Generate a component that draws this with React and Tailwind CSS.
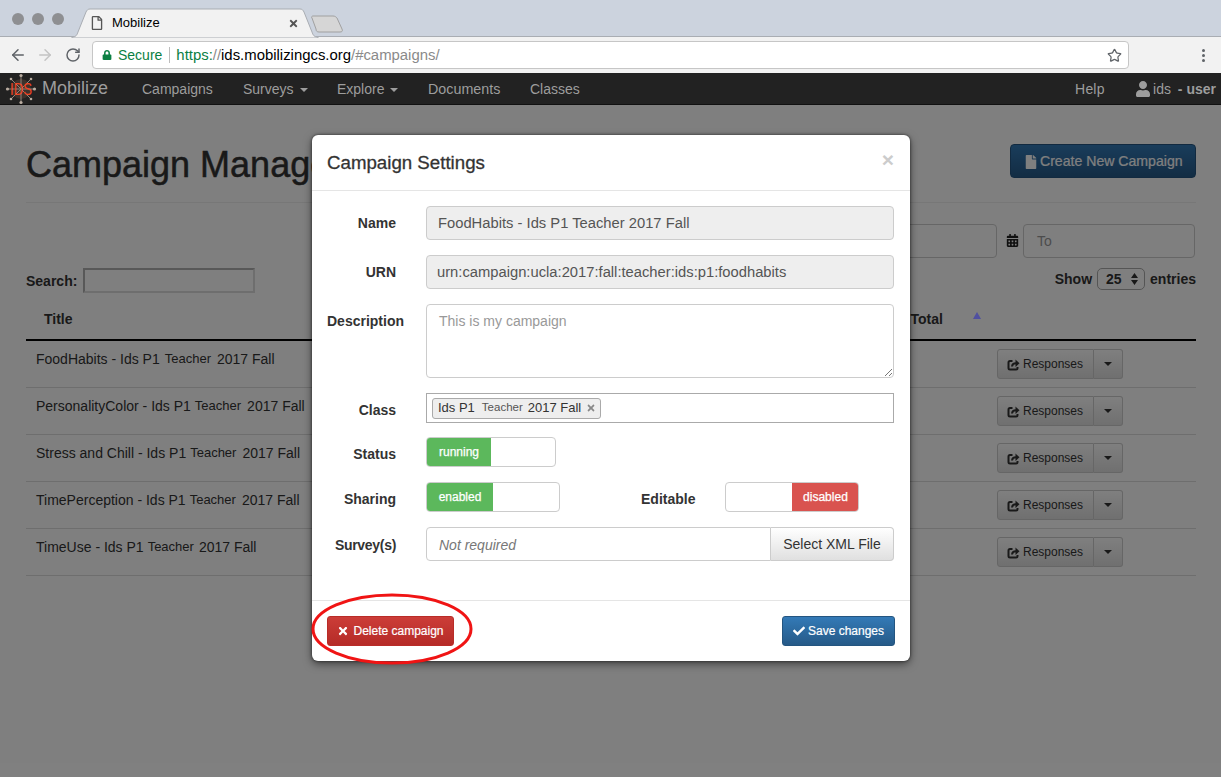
import { FaFile, FaRegFile, FaCalendarAlt, FaTimes, FaCheck, FaUser, FaLock } from "react-icons/fa";
import { ArrowLeft, ArrowRight, RotateCw, Star } from "lucide-react";

const campaigns = [
  { name: "FoodHabits - Ids P1", gap: "ml-[5px] mr-[6px]" },
  { name: "PersonalityColor - Ids P1", gap: "ml-[4px] mr-[6px]" },
  { name: "Stress and Chill - Ids P1", gap: "ml-[4px] mr-[6px]" },
  { name: "TimePerception - Ids P1", gap: "ml-[4px] mr-[6px]" },
  { name: "TimeUse - Ids P1", gap: "ml-[4px] mr-[5px]" },
];

function Caret({ className = "" }) {
  return <span className={"inline-block w-0 h-0 border-x-[4px] border-x-transparent border-t-[4px] " + className}></span>;
}

function ShareIcon() {
  return (
    <svg width="13" height="13" viewBox="0 0 13 13" fill="none" stroke="#333" strokeWidth="2">
      <path d="M10.500 9v1c0 .9-.6 1.500-1.500 1.500H3c-.9 0-1.500-.6-1.500-1.500V4.500C1.500 3.600 2.100 3 3 3h2.500" />
      <path d="M5 8.500C5.200 6.500 6.500 5.300 9 5.300" />
      <path d="M8.500 1.500L12.500 5.300 8.500 9z" fill="#333" stroke="none" />
    </svg>
  );
}

function Logo() {
  return (
    <svg width="32" height="32" viewBox="0 0 32 32" className="shrink-0">
      <circle cx="16" cy="16" r="10" fill="#3d322c" />
      <g stroke="#8f8378" strokeWidth="1">
        <path d="M16 2v28M2 16h28M6 6l20 20M26 6L6 26" />
      </g>
      <g fill="#b9aca0">
        <circle cx="16" cy="2.500" r="1.600" />
        <circle cx="16" cy="29.500" r="1.600" />
        <circle cx="2.500" cy="16" r="1.600" />
        <circle cx="29.500" cy="16" r="1.600" />
        <circle cx="6" cy="6" r="1.300" />
        <circle cx="26" cy="6" r="1.300" />
        <circle cx="6" cy="26" r="1.300" />
        <circle cx="26" cy="26" r="1.300" />
      </g>
      <text x="16" y="22" textAnchor="middle" fontSize="17" fontFamily="Liberation Sans, sans-serif" fill="#ee4423" textLength="22" lengthAdjust="spacingAndGlyphs">IDS</text>
    </svg>
  );
}

function BrowserChrome() {
  return (
    <>
      {/* tab strip */}
      <div className="relative h-[37px] bg-[#ccd3de] border-b border-[#a9adb3]">
        <div className="flex gap-2 pt-[13px] pl-3">
          <span className="w-3 h-3 rounded-full bg-[#8e8f92]"></span>
          <span className="w-3 h-3 rounded-full bg-[#8e8f92]"></span>
          <span className="w-3 h-3 rounded-full bg-[#8e8f92]"></span>
        </div>
        <svg className="absolute left-[70px] top-[8px]" width="280" height="30" viewBox="0 0 280 30">
          <path d="M2 29C6 29 7 27 8 24L16 4C17 2 18 1 20 1H230C232 1 233 2 234 4L242 24C243 27 244 29 248 29V30H2z" fill="#f2f2f2" stroke="#a9adb3" />
          <path d="M242 10C241 9 242 8 243 8H263C265 8 266 9 267 10L272 21C273 23 272 24 270 24H249C247 24 246 23 246 21z" fill="#d6d6d6" stroke="#a0a0a0" />
        </svg>
        <div className="absolute left-[90px] top-[13px] flex items-center text-[13px] text-black">
          <FaRegFile className="text-[14px] text-[#555] mr-[8px]" />
          <span>Mobilize</span>
        </div>
        <FaTimes className="absolute left-[288px] top-[18px] text-[11px] text-[#555]" />
      </div>
      {/* toolbar */}
      <div className="h-[36px] bg-[#f2f2f2] flex items-center pl-[9px] pr-[16px]">
        <ArrowLeft className="w-[18px] h-[18px] text-[#5f6368] mr-[9px]" strokeWidth={2} />
        <ArrowRight className="w-[18px] h-[18px] text-[#c4c4c4] mr-[11px]" strokeWidth={2} />
        <RotateCw className="w-[16px] h-[16px] text-[#5f6368] mr-[11px]" strokeWidth={2.200} />
        <div className="h-[28px] w-[1037px] bg-white border border-[#c6c6c6] rounded-[4px] flex items-center pl-[9px] pr-[6px] text-[14px]">
          <FaLock className="text-[10px] text-[#0b8043] mr-[6px]" />
          <span className="text-[#0b8043]">Secure</span>
          <span className="w-px h-[16px] bg-[#bdbdbd] ml-[7px] mr-[6px]"></span>
          <span className="text-[14.900px] whitespace-nowrap">
            <span className="text-[#0b8043]">https:</span>
            <span className="text-[#8a8a8a]">//</span>
            <span className="text-black">ids.mobilizingcs.org</span>
            <span className="text-[#8a8a8a]">/#campaigns/</span>
          </span>
          <Star className="w-[15px] h-[15px] text-[#5f6368] ml-auto" strokeWidth={2} />
        </div>
        <div className="ml-auto flex flex-col gap-[2px]">
          <span className="w-[3px] h-[3px] rounded-full bg-[#5f6368]"></span>
          <span className="w-[3px] h-[3px] rounded-full bg-[#5f6368]"></span>
          <span className="w-[3px] h-[3px] rounded-full bg-[#5f6368]"></span>
        </div>
      </div>
    </>
  );
}

function Navbar() {
  return (
    <nav className="h-[32px] bg-[#222] border-b border-[#111] flex items-center text-[14px] text-[#9d9d9d] pl-[5px] pr-[5px]">
      <Logo />
      <span className="text-[18px] ml-[5px] w-[100px]">Mobilize</span>
      <span className="w-[101px] pt-[2px]">Campaigns</span>
      <span className="w-[94px] flex items-center pt-[2px]">Surveys<Caret className="border-t-[#9d9d9d] ml-[6px]" /></span>
      <span className="w-[91px] flex items-center pt-[2px]">Explore<Caret className="border-t-[#9d9d9d] ml-[6px]" /></span>
      <span className="w-[102px] pt-[2px] text-[14.300px]">Documents</span>
      <span className="pt-[2px]">Classes</span>
      <span className="ml-auto w-[60px] pt-[2px] tracking-[0.2px]">Help</span>
      <span className="flex items-center pt-[1px]">
        <FaUser className="text-[16px] mr-[2px]" />
        <span>ids</span>
        <span className="font-bold ml-[3px]">&nbsp;- user</span>
      </span>
    </nav>
  );
}

function CampaignRow({ row }) {
  return (
    <div className="h-[47px] border-b border-[#ddd] flex items-start text-[14px] text-[#333]">
      <div className="pl-[10px] pt-[8px] leading-[20px] flex whitespace-nowrap">
        <span>{row.name}</span>
        <span className={"text-[13px] " + row.gap}>Teacher</span>
        <span>2017 Fall</span>
      </div>
      <div className="ml-auto mr-[73px] mt-[8px] flex h-[30px] text-[12px]">
        <span className="w-[97px] border border-[#ccc] rounded-l-[3px] bg-gradient-to-b from-white to-[#e0e0e0] flex items-center pl-[9px] gap-[3px]">
          <ShareIcon />
          Responses
        </span>
        <span className="w-[29px] border border-l-0 border-[#ccc] rounded-r-[3px] bg-gradient-to-b from-white to-[#e0e0e0] flex items-center justify-center">
          <Caret className="border-t-[#333]" />
        </span>
      </div>
    </div>
  );
}

function PageBehind() {
  return (
    <main className="pl-[26px] pr-[25px] bg-white h-[672px] text-[#333]">
      <div className="flex items-start h-[98px] border-b border-[#eee]">
        <h1 className="text-[36px] leading-[40px] font-normal mt-[40px] whitespace-nowrap [-webkit-text-stroke:0.5px_#333]">Campaign Management</h1>
        <div className="ml-auto mt-[39px] w-[186px] h-[34px] rounded-[4px] border border-[#245580] bg-gradient-to-b from-[#337ab7] to-[#265a88] text-white text-[14.100px] flex items-center pl-[13px] gap-[2px] pt-[1px] [-webkit-text-stroke:0.2px_white]">
          <FaFile className="text-[14px]" />
          Create New Campaign
        </div>
      </div>
      <div className="flex justify-end items-center mt-[20px] h-[35px] pr-[1px]">
        <div className="w-[200px] h-[34px] border border-[#ccc] rounded-[4px] bg-white"></div>
        <FaCalendarAlt className="text-[13px] ml-[9px] mr-[4px] text-[#222]" />
        <div className="w-[172px] h-[34px] border border-[#ccc] rounded-[4px] bg-white pl-[13px] pt-[2px] flex items-center text-[14px] text-[#999]">To</div>
      </div>
      <div className="flex items-center justify-between mt-[10px] h-[25px] text-[14px] font-bold">
        <div className="flex items-center gap-[6px]">
          <span className="pt-[2px]">Search:</span>
          <span className="w-[172px] h-[25px] border-2 border-t-[#b0b0b0] border-l-[#b0b0b0] border-r-[#ddd] border-b-[#ddd] bg-white"></span>
        </div>
        <div className="flex items-center gap-[5px] -mt-[3px]">
          Show
          <span className="w-[48px] h-[22px] border border-[#aaa] rounded-[5px] font-bold flex items-center pl-[8px] text-[#333]">
            25
            <svg width="7" height="12" viewBox="0 0 7 12" className="ml-[9px]" fill="#333"><path d="M3.500 0L7 5H0zM3.500 12L0 7h7z" /></svg>
          </span>
          entries
        </div>
      </div>
      <div className="h-[48px] border-b-2 border-black flex items-start text-[14px] font-bold">
        <span className="ml-[18px] mt-[16px]">Title</span>
        <span className="ml-[838px] mt-[16px]">Total</span>
        {/* sort arrow keeps its colour through the backdrop */}
        <span className="relative z-10 ml-[30px] mt-[19px] w-0 h-0 border-x-[4px] border-x-transparent border-b-[7px] border-b-[#5050a0]"></span>
      </div>
      {campaigns.map((row) => (
        <CampaignRow key={row.name} row={row} />
      ))}
    </main>
  );
}

function FieldRow({ label, className = "", labelClass = "", children }) {
  return (
    <div className={"flex " + className}>
      <label className={"w-[69px] mr-[30px] shrink-0 text-right font-bold text-[14px] text-[#333] whitespace-nowrap " + labelClass}>{label}</label>
      {children}
    </div>
  );
}

function Toggle({ label, color, width, onWidth, right }) {
  return (
    <div className={"h-[30px] border border-[#ccc] rounded-[4px] flex overflow-hidden bg-white text-white text-[12px] [-webkit-text-stroke:0.25px_white] " + width + (right ? " justify-end" : "")}>
      <span className={"h-full flex items-center justify-center " + color + " " + onWidth}>{label}</span>
    </div>
  );
}

function Modal() {
  return (
    <div className="absolute z-20 left-[312px] top-[135px] w-[598px] h-[526px] bg-white rounded-[6px] shadow-[0_3px_9px_rgba(0,0,0,0.5),0_0_3px_rgba(0,0,0,0.6)] flex flex-col text-[14px] text-[#555]">
      <div className="h-[56px] border-b border-[#e5e5e5] flex items-center justify-between pl-[15px] pr-[16px] shrink-0">
        <h4 className="text-[18.700px] font-normal text-[#333] pt-[1px] [-webkit-text-stroke:0.3px_#333]">Campaign Settings</h4>
        <span className="text-[21px] font-bold text-[#ccc] leading-none -mt-[7px]">×</span>
      </div>
      <div className="pl-[15px] pr-[16px] pt-[15px] flex-1">
        <FieldRow label="Name" className="items-center h-[34px]">
          <div className="flex-1 h-[34px] bg-[#eee] border border-[#ccc] rounded-[4px] px-[11px] flex items-center text-[14.750px]">FoodHabits - Ids P1 Teacher 2017 Fall</div>
        </FieldRow>
        <FieldRow label="URN" className="items-center h-[34px] mt-[15px]">
          <div className="flex-1 h-[34px] bg-[#eee] border border-[#ccc] rounded-[4px] px-[10px] flex items-center text-[14.750px]">urn:campaign:ucla:2017:fall:teacher:ids:p1:foodhabits</div>
        </FieldRow>
        <FieldRow label="Description" className="mt-[15px] h-[74px]" labelClass="pt-[7px]">
          <div className="flex-1 h-[74px] border border-[#ccc] rounded-[4px] px-[12px] pt-[6px] text-[#999] leading-[20px] relative">
            This is my campaign
            <svg className="absolute right-[1px] bottom-[1px]" width="8" height="8" viewBox="0 0 8 8" stroke="#777"><path d="M1 8L8 1M5 8L8 5" /></svg>
          </div>
        </FieldRow>
        <FieldRow label="Class" className="items-center h-[30px] mt-[15px]" labelClass="pt-[4px]">
          <div className="flex-1 h-[30px] border border-[#aaa] flex items-center pl-[5px] text-[#333] text-[13px]">
            <span className="h-[21px] pl-[5px] pr-[4px] bg-[#eee] border border-[#aaa] rounded-[3px] flex items-center">
              Ids P1
              <span className="text-[11.500px] text-[#555] ml-[7px] mr-[5px]">Teacher</span>
              2017 Fall
              <FaTimes className="text-[10px] text-[#888] ml-[5px]" />
            </span>
          </div>
        </FieldRow>
        <FieldRow label="Status" className="items-center h-[30px] mt-[14px]" labelClass="pt-[4px]">
          <Toggle label="running" color="bg-[#5cb85c]" width="w-[130px]" onWidth="w-[64px]" />
        </FieldRow>
        <FieldRow label="Sharing" className="items-center h-[30px] mt-[15px]" labelClass="pt-[4px]">
          <Toggle label="enabled" color="bg-[#5cb85c]" width="w-[134px]" onWidth="w-[66px]" />
          <span className="ml-[81px] font-bold text-[#333] pt-[4px]">Editable</span>
          <span className="ml-[30px]">
            <Toggle label="disabled" color="bg-[#d9534f]" width="w-[134px]" onWidth="w-[66px]" right />
          </span>
        </FieldRow>
        <FieldRow label="Survey(s)" className="items-center h-[34px] mt-[15px]" labelClass="pt-[2px] tracking-[-0.3px]">
          <div className="flex-1 h-[34px] flex">
            <div className="flex-1 border border-[#ccc] rounded-l-[4px] pl-[12px] pt-[2px] flex items-center italic text-[#777]">Not required</div>
            <div className="w-[123px] border border-l-0 border-[#ccc] rounded-r-[4px] bg-gradient-to-b from-white to-[#e0e0e0] flex items-center justify-center text-[#333]">Select XML File</div>
          </div>
        </FieldRow>
      </div>
      <div className="h-[61px] border-t border-[#e5e5e5] flex items-center justify-between pl-[15px] pr-[15px] shrink-0 text-[12px] text-white [-webkit-text-stroke:0.2px_white]">
        <span className="w-[127px] h-[30px] rounded-[3px] border border-[#b92c28] bg-gradient-to-b from-[#cc3d38] to-[#b52b27] flex items-center justify-center gap-[4px]">
          <FaTimes className="text-[12px]" />
          Delete campaign
        </span>
        <span className="w-[113px] h-[30px] rounded-[3px] border border-[#245580] bg-gradient-to-b from-[#337ab7] to-[#265a88] flex items-center justify-center gap-[3px]">
          <FaCheck className="text-[12px]" />
          Save changes
        </span>
      </div>
    </div>
  );
}

export default function App() {
  return (
    <div className="relative w-[1221px] h-[777px] overflow-hidden bg-white font-['Liberation_Sans',Arial,sans-serif]">
      <BrowserChrome />
      <Navbar />
      <PageBehind />
      {/* modal backdrop starts under the fixed navbar */}
      <div className="absolute left-0 right-0 top-[105px] bottom-0 bg-black/50"></div>
      <Modal />
      {/* red annotation around the delete button */}
      <svg className="absolute z-30 left-[305px] top-[590px]" width="175" height="80" viewBox="0 0 175 80" fill="none">
        <ellipse cx="87" cy="39" rx="79" ry="34" stroke="#f01414" strokeWidth="3" />
      </svg>
    </div>
  );
}
